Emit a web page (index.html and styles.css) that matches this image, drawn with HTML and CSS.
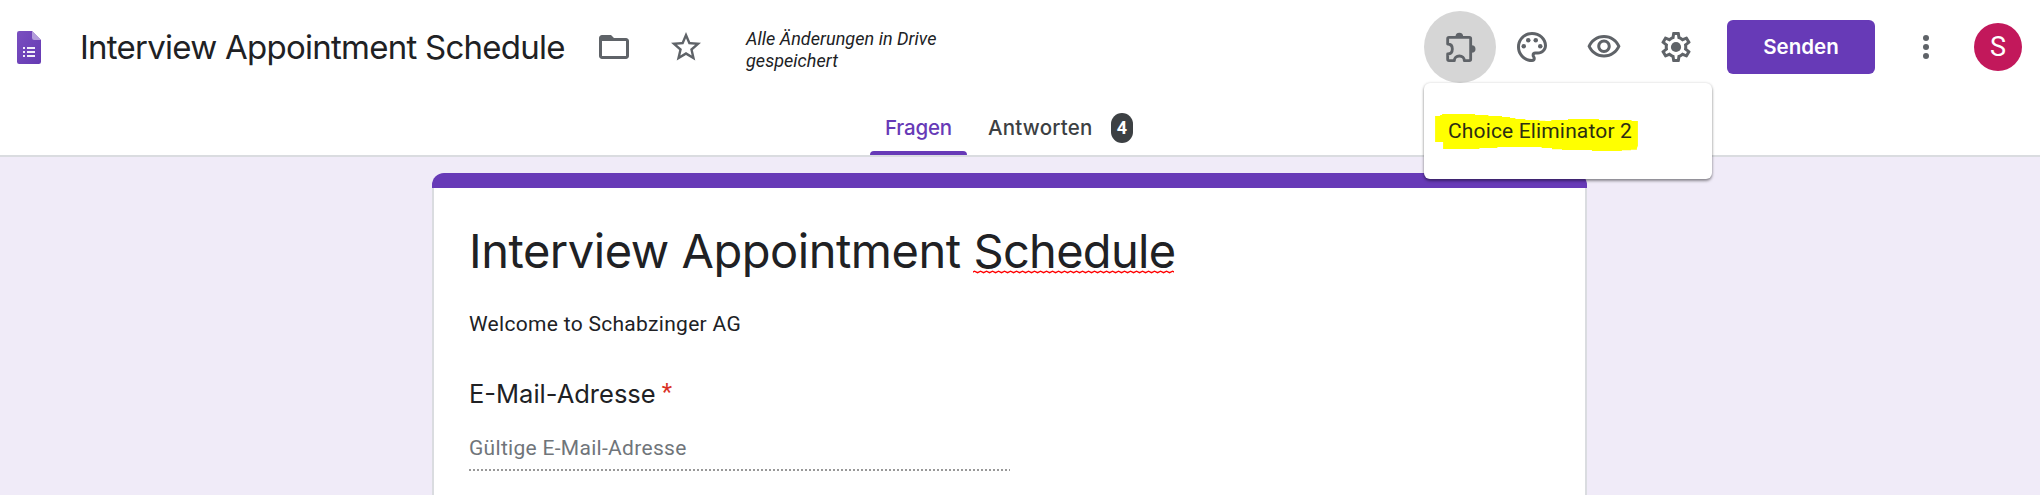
FILE: index.html
```html
<!DOCTYPE html>
<html lang="de">
<head>
<meta charset="utf-8">
<title>Interview Appointment Schedule</title>
<link rel="stylesheet" href="styles.css">
</head>
<body>
<header class="header">
  <div class="toolbar">
    <svg class="logo" viewBox="0 0 24 33">
      <defs><linearGradient id="doc" x1="0" y1="0" x2="1" y2="1"><stop offset="0" stop-color="#7a4fc0"/><stop offset="1" stop-color="#653ab3"/></linearGradient></defs>
      <path d="M2.200 0H15l9 9v21.800q0 2.200-2.200 2.200H2.200Q0 33 0 30.800V2.200Q0 0 2.200 0z" fill="url(#doc)"/>
      <path d="M15 0l9 9h-6.800Q15 9 15 6.800z" fill="#b39ddb"/>
      <path d="M6 16h2v2H6zm0 4h2v2H6zm0 4h2v2H6zm4-8h8v2h-8zm0 4h8v2h-8zm0 4h8v2h-8z" fill="#f1edf9"/>
    </svg>
    <div class="doc-title">Interview Appointment Schedule</div>
    <svg class="icon folder" viewBox="0 0 24 24"><path d="M20 6h-8l-2-2H4c-1.100 0-1.990.9-1.990 2L2 18c0 1.100.9 2 2 2h16c1.100 0 2-.9 2-2V8c0-1.100-.9-2-2-2zm0 12H4V8h16v10z"/></svg>
    <svg class="icon star" viewBox="0 0 24 24"><path d="M22 9.240l-7.190-.62L12 2 9.190 8.630 2 9.240l5.460 4.730L5.820 21 12 17.270 18.180 21l-1.630-7.030L22 9.240zM12 15.400l-3.760 2.270 1-4.280-3.320-2.880 4.380-.38L12 6.100l1.710 4.040 4.380.38-3.320 2.880 1 4.280L12 15.400z"/></svg>
    <div class="save-state">Alle Änderungen in Drive<br>gespeichert</div>
    <div class="actions">
      <div class="addons">
        <button class="tool active"><svg class="icon" viewBox="96 87 108 108"><path d="M113 116q0-4 4-4H178q4 0 4 4V178q0 4-4 4H163c0-8-6-14-15-14s-15 6-15 14H117q-4 0-4-4V162c9 0 14-6 14-15s-5-15-14-15z" fill="none" stroke="#5f6368" stroke-width="8.500" stroke-linejoin="round"/><path d="M136.500 110a11.500 11.500 0 0 1 23 0zM185 135.500a11.500 11.500 0 0 1 0 23z"/></svg></button>
        <div class="menu">
          <svg class="marker" viewBox="75 342 609 112"><path d="M75 348H90V345H96V342H195V345H235V348H276V351H300V354H316V357H346V360H388V362H406V363H424V360H474V357H567V360H665V363H684V437L681 445V449H663V451H636V454H546V450H456V448H426V444H395V441H262V444H208V447H99V426H75z"/></svg>
          <span class="menu-item">Choice Eliminator 2</span>
        </div>
      </div>
      <button class="tool"><svg class="icon" viewBox="0 0 24 24"><path d="M12 22C6.490 22 2 17.510 2 12S6.490 2 12 2s10 4.040 10 9c0 3.310-2.690 6-6 6h-1.770c-.28 0-.5.22-.5.5 0 .12.05.23.13.33.41.47.64 1.060.64 1.670A2.500 2.500 0 0 1 12 22zm0-18c-4.410 0-8 3.590-8 8s3.590 8 8 8c.28 0 .5-.22.5-.5a.54.54 0 0 0-.14-.35c-.41-.46-.63-1.050-.63-1.650a2.500 2.500 0 0 1 2.500-2.500H16c2.210 0 4-1.790 4-4 0-3.860-3.590-7-8-7z"/><circle cx="6.500" cy="11.500" r="1.500"/><circle cx="9.500" cy="7.500" r="1.500"/><circle cx="14.500" cy="7.500" r="1.500"/><circle cx="17.500" cy="11.500" r="1.500"/></svg></button>
      <button class="tool"><svg class="icon" viewBox="0 0 24 24"><path d="M12 6c3.790 0 7.170 2.130 8.820 5.500C19.170 14.870 15.790 17 12 17s-7.170-2.130-8.820-5.500C4.830 8.130 8.210 6 12 6m0-2C7 4 2.730 7.110 1 11.500 2.730 15.890 7 19 12 19s9.270-3.110 11-7.500C21.270 7.110 17 4 12 4zm0 5c1.380 0 2.500 1.120 2.500 2.500S13.380 14 12 14s-2.500-1.120-2.500-2.500S10.620 9 12 9m0-2c-2.480 0-4.500 2.020-4.500 4.500S9.520 16 12 16s4.500-2.020 4.500-4.500S14.480 7 12 7z"/></svg></button>
      <button class="tool"><svg class="icon" viewBox="0 0 24 24"><path d="M19.430 12.980c.04-.32.07-.64.07-.98 0-.34-.03-.66-.07-.98l2.110-1.650c.19-.15.24-.42.12-.64l-2-3.460a.5.5 0 0 0-.61-.22l-2.490 1c-.52-.4-1.080-.73-1.690-.98l-.38-2.650A.488.488 0 0 0 14 2h-4c-.25 0-.46.18-.49.42l-.38 2.650c-.61.25-1.170.59-1.690.98l-2.490-1a.566.566 0 0 0-.18-.03c-.17 0-.34.09-.43.25l-2 3.460c-.13.22-.07.49.12.64l2.110 1.650c-.04.32-.07.65-.07.98 0 .33.03.66.07.98l-2.110 1.650c-.19.15-.24.42-.12.64l2 3.460c.12.22.39.3.61.22l2.490-1c.52.4 1.080.73 1.690.98l.38 2.650c.03.24.24.42.49.42h4c.25 0 .46-.18.49-.42l.38-2.650c.61-.25 1.170-.59 1.690-.98l2.490 1c.06.02.12.03.18.03.17 0 .34-.09.43-.25l2-3.460c.12-.22.07-.49-.12-.64l-2.110-1.650zm-1.980-1.710c.04.31.05.52.05.73 0 .21-.02.43-.05.73l-.14 1.130.89.7 1.080.84-.7 1.210-1.270-.51-1.040-.42-.9.68c-.43.32-.84.56-1.250.73l-1.060.43-.16 1.130-.2 1.350h-1.400l-.19-1.350-.16-1.130-1.060-.43c-.43-.18-.83-.41-1.230-.71l-.91-.7-1.060.43-1.270.51-.7-1.210 1.080-.84.89-.7-.14-1.130c-.03-.31-.05-.54-.05-.74s.02-.43.05-.73l.14-1.130-.89-.7-1.080-.84.7-1.210 1.270.51 1.040.42.9-.68c.43-.32.84-.56 1.250-.73l1.060-.43.16-1.130.2-1.350h1.390l.19 1.350.16 1.130 1.060.43c.43.18.83.41 1.230.71l.91.7 1.060-.43 1.270-.51.7 1.210-1.070.85-.89.7.14 1.130z"/><circle cx="12" cy="12" r="3.400"/></svg></button>
      <button class="send">Senden</button>
      <svg class="icon more" viewBox="0 0 24 24"><circle cx="12" cy="6" r="2"/><circle cx="12" cy="12" r="2"/><circle cx="12" cy="18" r="2"/></svg>
      <div class="avatar">S</div>
    </div>
  </div>
  <nav class="tabs">
    <div class="tab selected">Fragen</div>
    <div class="tab"><span class="tab-label">Antworten</span><span class="badge">4</span></div>
  </nav>
</header>
<main class="card">
  <h1 class="form-title">Interview Appointment <span class="misspelled">Schedule<svg class="squiggle" width="201" height="4"><defs><pattern id="wave" width="6" height="4" patternUnits="userSpaceOnUse"><path d="M-1.500 2.700L1.500 1.200L4.500 2.700L7.500 1.200" fill="none" stroke="#f00" stroke-width="1.400"/></pattern></defs><rect width="201" height="4" fill="url(#wave)"/></svg></span></h1>
  <p class="description">Welcome to Schabzinger AG</p>
  <h2 class="question">E-Mail-Adresse<span class="required">*</span></h2>
  <div class="answer">Gültige E-Mail-Adresse</div>
</main>
</body>
</html>
```
FILE: styles.css
```css
* { box-sizing: border-box; }
body {
  display: flex;
  flex-direction: column;
  margin: 0;
  height: 100vh;
  overflow: hidden;
  background: #f0ebf8;
  color: #202124;
  font-family: Roboto, "Liberation Sans", sans-serif;
}
button { border: 0; padding: 0; background: none; font: inherit; }
.header {
  flex: none;
  height: 157px;
  background: #fff;
  border-bottom: 2px solid #dadce0;
}
.toolbar {
  display: flex;
  align-items: center;
  height: 94px;
  padding: 0 18px 0 17px;
}
.icon { flex: none; display: block; width: 36px; height: 36px; fill: #5f6368; }
.logo { flex: none; width: 24px; height: 33px; }
.doc-title {
  width: 516px;
  margin-left: 39px;
  white-space: nowrap;
  font: 400 33px/48px Inter, sans-serif;
  letter-spacing: -.75px;
}
.star { margin-left: 36px; }
.save-state {
  width: 220px;
  margin: 6px 0 0 42px;
  font-size: 18px;
  font-style: italic;
  line-height: 22px;
  letter-spacing: .04px;
}
.actions { display: flex; align-items: center; margin-left: auto; }
.addons { position: relative; }
.tool {
  display: flex;
  align-items: center;
  justify-content: center;
  width: 72px;
  height: 72px;
  border-radius: 50%;
}
.tool.active { background: #d6d6d6; }
.menu {
  position: absolute;
  z-index: 2;
  top: 72px;
  left: 0;
  display: flex;
  align-items: center;
  width: 288px;
  height: 96px;
  padding-left: 24px;
  border-radius: 6px;
  background: #fff;
  box-shadow: 0 2px 3px rgba(0, 0, 0, .4), 0 0 3px rgba(0, 0, 0, .15);
}
.marker {
  position: absolute;
  top: 31px;
  left: 11px;
  width: 203px;
  height: 37.300px;
  fill: #ff0;
}
.menu-item { position: relative; white-space: nowrap; font-size: 21px; letter-spacing: .15px; color: #2c2e12; }
.send {
  width: 148px;
  height: 54px;
  margin-left: 15px;
  border-radius: 6px;
  background: #673ab7;
  color: #fff;
  font: 600 20.500px/54px Inter, sans-serif;
}
.more { margin-left: 33px; }
.avatar {
  width: 48px;
  height: 48px;
  margin-left: 30px;
  border-radius: 50%;
  background: #c2185b;
  color: #fff;
  font-size: 27px;
  line-height: 49px;
  text-align: center;
}
.tabs { display: flex; height: 61px; padding-left: 870px; }
.tab {
  position: relative;
  display: flex;
  align-items: center;
  padding: 7px 0 0 21px;
  color: #3c4043;
  font: 500 20.500px/30px Inter, sans-serif;
}
.tab-label { width: 104px; letter-spacing: .2px; }
.tab.selected { width: 97px; padding-left: 15px; color: #673ab7; letter-spacing: -.2px; }
.tab.selected::after {
  content: "";
  position: absolute;
  right: 0;
  bottom: 0;
  left: 0;
  height: 4px;
  border-radius: 4px 4px 0 0;
  background: #673ab7;
}
.badge {
  width: 22px;
  height: 30px;
  margin-left: 19px;
  border-radius: 11px;
  background: #3c4043;
  color: #fff;
  font: 700 18px/30px Roboto, sans-serif;
  text-align: center;
}
.card {
  flex: 1;
  width: 1155px;
  margin: 16px 0 0 432px;
  padding: 48px 37px 0;
  border-radius: 12px 12px 0 0;
  background:
    linear-gradient(#673ab7, #673ab7) 0 0 / 100% 15px no-repeat,
    linear-gradient(90deg, #dadce0 2px, #fff 2px, #fff calc(100% - 2px), #dadce0 calc(100% - 2px));
}
.form-title { margin: 0; font: 400 47px/60px Inter, sans-serif; letter-spacing: -.47px; }
.misspelled { position: relative; display: inline-block; letter-spacing: -.7px; }
.squiggle { position: absolute; left: 0; bottom: 7px; }
.description { margin: 28px 0 0; font-size: 21px; line-height: 30px; letter-spacing: .3px; }
.question { display: flex; margin: 37px 0 0; font: 400 25.500px/36px Inter, sans-serif; }
.required { margin-left: 6px; color: #d93025; font: 24px/32px Roboto, sans-serif; }
.answer {
  width: 541px;
  height: 38px;
  margin-top: 21px;
  background: repeating-linear-gradient(90deg, #999 0 2px, transparent 2px 4px) 0 100% / 100% 2px no-repeat;
  color: #70757a;
  font-size: 21px;
  line-height: 30px;
  letter-spacing: .3px;
}
```
